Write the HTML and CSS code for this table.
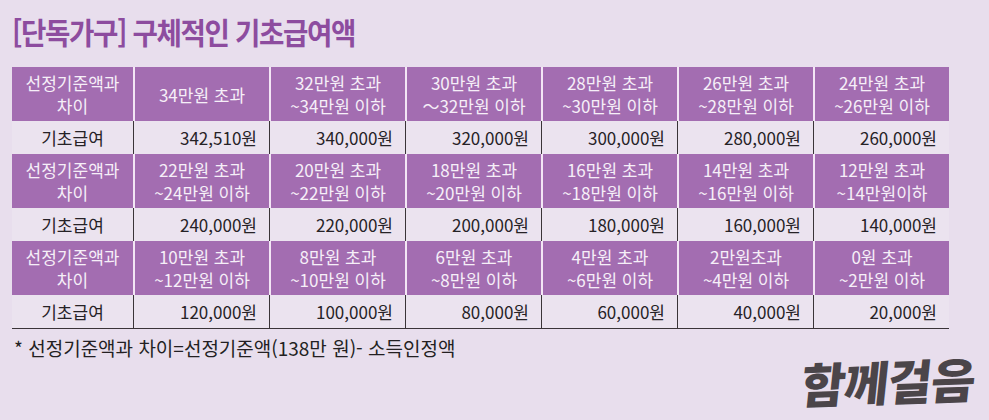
FILE: index.html
```html
<!DOCTYPE html>
<html lang="ko">
<head>
<meta charset="utf-8">
<link rel="stylesheet" href="styles.css">
</head>
<body>
<div class="page">
  <h1 class="title">[단독가구] 구체적인 기초급여액</h1>
  <div class="tbl">
    <div class="h first">선정기준액과<br>차이</div>
    <div class="h">34만원 초과</div>
    <div class="h">32만원 초과<br>~34만원 이하</div>
    <div class="h">30만원 초과<br>～32만원 이하</div>
    <div class="h">28만원 초과<br>~30만원 이하</div>
    <div class="h">26만원 초과<br>~28만원 이하</div>
    <div class="h">24만원 초과<br>~26만원 이하</div>
    <div class="d first">기초급여</div>
    <div class="d">342,510원</div>
    <div class="d">340,000원</div>
    <div class="d">320,000원</div>
    <div class="d">300,000원</div>
    <div class="d">280,000원</div>
    <div class="d">260,000원</div>

    <div class="h first">선정기준액과<br>차이</div>
    <div class="h">22만원 초과<br>~24만원 이하</div>
    <div class="h">20만원 초과<br>~22만원 이하</div>
    <div class="h">18만원 초과<br>~20만원 이하</div>
    <div class="h">16만원 초과<br>~18만원 이하</div>
    <div class="h">14만원 초과<br>~16만원 이하</div>
    <div class="h">12만원 초과<br>~14만원이하</div>
    <div class="d first">기초급여</div>
    <div class="d">240,000원</div>
    <div class="d">220,000원</div>
    <div class="d">200,000원</div>
    <div class="d">180,000원</div>
    <div class="d">160,000원</div>
    <div class="d">140,000원</div>

    <div class="h first">선정기준액과<br>차이</div>
    <div class="h">10만원 초과<br>~12만원 이하</div>
    <div class="h">8만원 초과<br>~10만원 이하</div>
    <div class="h">6만원 초과<br>~8만원 이하</div>
    <div class="h">4만원 초과<br>~6만원 이하</div>
    <div class="h">2만원초과<br>~4만원 이하</div>
    <div class="h">0원 초과<br>~2만원 이하</div>
    <div class="d first last">기초급여</div>
    <div class="d last">120,000원</div>
    <div class="d last">100,000원</div>
    <div class="d last">80,000원</div>
    <div class="d last">60,000원</div>
    <div class="d last">40,000원</div>
    <div class="d last">20,000원</div>
  </div>
  <p class="note">* 선정기준액과 차이=선정기준액(138만 원)- 소득인정액</p>
  <div class="logo-row"><span class="logo">함께걸음</span></div>
</div>
</body>
</html>
```
FILE: styles.css
```css
html, body {
  margin: 0;
  padding: 0;
  background: #e8deed;
}
body {
  width: 989px;
  height: 420px;
  overflow: hidden;
  font-family: "Noto Sans CJK KR", "Noto Sans", sans-serif;
  color: #262226;
}
.page {
  padding: 12px 0 0 12px;
}
.title {
  margin: 0;
  font-size: 30px;
  line-height: 38px;
  font-weight: 700;
  letter-spacing: -1.5px;
  color: #8d4c9f;
  transform: scaleX(0.92);
  transform-origin: left center;
  white-space: nowrap;
}
.tbl {
  margin-top: 17px;
  display: grid;
  grid-template-columns: 121px repeat(6, 136px);
  width: 937px;
}
.h {
  background: #a36db1;
  color: #f6eff8;
  height: 54px;
  display: flex;
  align-items: center;
  justify-content: center;
  text-align: center;
  font-size: 17px;
  line-height: 23px;
  border-left: 2px solid #f3e6f5;
}
.d {
  height: 33px;
  display: flex;
  align-items: center;
  justify-content: flex-end;
  padding-right: 12px;
  font-size: 17px;
  border-left: 1px solid #3a3438;
  background: #ebe3ef;
}
.h.first, .d.first {
  border-left: none;
}
.d.first {
  justify-content: center;
  padding-right: 0;
}
.d.last {
  border-bottom: 1px solid #3a3438;
}
.note {
  margin: 6px 0 0 2px;
  font-size: 19px;
  line-height: 26px;
  color: #231f22;
}
.logo-row {
  display: flex;
  justify-content: flex-end;
  padding-right: 14px;
  margin-top: -4px;
}
.logo {
  font-size: 48px;
  line-height: 46px;
  font-weight: 900;
  color: #4b4549;
  letter-spacing: -1px;
  transform: skewX(-8deg) rotate(-2deg);
  white-space: nowrap;
}
```
